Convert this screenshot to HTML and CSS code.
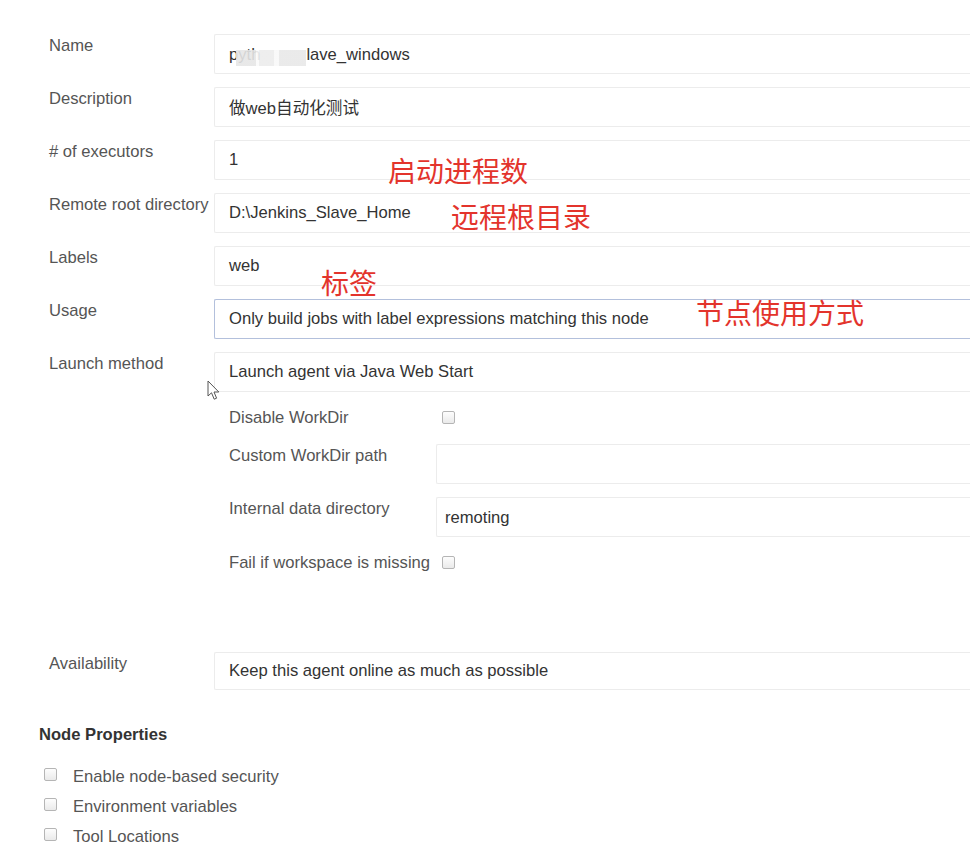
FILE: index.html
```html
<!DOCTYPE html>
<html>
<head>
<meta charset="utf-8">
<link rel="stylesheet" href="styles.css">
</head>
<body>
<div class="page">
  <div class="form">
    <div class="row"><div class="label">Name</div><div class="field"><span class="blur-text">pyth<span class="mask"></span>lave_windows</span></div></div>
    <div class="row"><div class="label">Description</div><div class="field">做web自动化测试</div></div>
    <div class="row"><div class="label"># of executors</div><div class="field">1</div></div>
    <div class="row"><div class="label">Remote root directory</div><div class="field">D:\Jenkins_Slave_Home</div></div>
    <div class="row"><div class="label">Labels</div><div class="field">web</div></div>
    <div class="row"><div class="label">Usage</div><div class="field focused">Only build jobs with label expressions matching this node</div></div>
    <div class="row"><div class="label">Launch method</div><div class="field">Launch agent via Java Web Start</div></div>

    <div class="nested">
      <div class="nrow check"><div class="nlabel">Disable WorkDir</div><span class="box"></span></div>
      <div class="nrow"><div class="nlabel">Custom WorkDir path</div><div class="field nfield"></div></div>
      <div class="nrow"><div class="nlabel">Internal data directory</div><div class="field nfield low">remoting</div></div>
      <div class="nrow check"><div class="nlabel">Fail if workspace is missing</div><span class="box"></span></div>
    </div>

    <div class="row avail"><div class="label">Availability</div><div class="field">Keep this agent online as much as possible</div></div>
  </div>

  <h3 class="section">Node Properties</h3>
  <ul class="props">
    <li><span class="box"></span>Enable node-based security</li>
    <li><span class="box"></span>Environment variables</li>
    <li><span class="box"></span>Tool Locations</li>
  </ul>

  <div class="note n1">启动进程数</div>
  <div class="note n2">远程根目录</div>
  <div class="note n3">标签</div>
  <div class="note n4">节点使用方式</div>

  <svg class="cursor" width="16" height="22" viewBox="0 0 16 22">
    <path d="M1 1 L1 16 L4.5 12.8 L7.2 19.2 L9.6 18.2 L7 12 L11.8 12 Z" fill="#fff" stroke="#555" stroke-width="1" stroke-linejoin="round"/>
  </svg>
</div>
</body>
</html>
```

FILE: styles.css
```css
html, body {
  margin: 0;
  padding: 0;
  background: #fff;
  overflow: hidden;
}
body {
  font-family: "Liberation Sans", Arial, "Noto Sans CJK SC", sans-serif;
  font-size: 16.6px;
  color: #333;
}
.page {
  position: relative;
  width: 970px;
  height: 844px;
  overflow: hidden;
  padding-top: 34px;
  box-sizing: border-box;
}
.form {
  width: 1000px;
}
.row {
  display: flex;
  margin-bottom: 13px;
}
.row + .row {
  margin-top: 0.4px;
}
.label {
  width: 165px;
  padding-left: 49px;
  padding-top: 3px;
  line-height: 18px;
  color: #555;
  flex: none;
  white-space: nowrap;
}
.field {
  flex: 1;
  height: 40px;
  box-sizing: border-box;
  border: 1px solid #ececec;
  border-right: none;
  border-radius: 2px 0 0 2px;
  padding-left: 14px;
  display: flex;
  align-items: center;
  color: #333;
  white-space: nowrap;
}
.field.focused {
  border: 1px solid #b3c0dc;
  border-right: none;
}
.blur-text {
  position: relative;
  top: 1px;
}
.mask {
  display: inline-block;
  width: 70px;
  height: 16px;
  margin-left: -24px;
  vertical-align: -6px;
  background: linear-gradient(90deg, #e6e6e6 0 28%, #fafafa 28% 33%, #ececec 33% 55%, #f8f8f8 55% 62%, #e8e8e8 62% 100%);
  opacity: 0.9;
}
.nested {
  margin-top: 1px;
  padding-left: 229px;
}
.nrow {
  display: flex;
  margin-bottom: 13px;
}
.nrow.check {
  height: 26px;
  align-items: flex-start;
}
.nlabel {
  width: 207px;
  flex: none;
  padding-top: 3px;
  line-height: 18px;
  color: #555;
  white-space: nowrap;
}
.nrow.check .nlabel {
  padding-top: 4px;
}
.nrow .box {
  margin-top: 6px;
  margin-left: 6px;
}
.nfield {
  padding-left: 8px;
}
.nfield.low {
  padding-top: 2px;
}
.box {
  display: inline-block;
  width: 11px;
  height: 11px;
  border: 1px solid #b5b5b5;
  border-radius: 2px;
  background: linear-gradient(#fdfdfd, #eaeaea);
  flex: none;
}
.avail {
  margin-top: 76px;
}
.avail .field {
  height: 38px;
}
.section {
  margin: 36px 0 0 39px;
  font-size: 16.6px;
  line-height: 18px;
  font-weight: bold;
  color: #333;
}
.props {
  list-style: none;
  margin: 25px 0 0 0;
  padding: 0 0 0 44px;
}
.props li {
  display: flex;
  align-items: flex-start;
  height: 30px;
  line-height: 16px;
  color: #555;
}
.props li:last-child {
  height: 16px;
}
.props li .box {
  margin-top: -1px;
  margin-right: 16px;
}
.note {
  position: absolute;
  font-family: "Noto Sans CJK SC", sans-serif;
  font-size: 28px;
  line-height: 28px;
  color: #e3342c;
  white-space: nowrap;
}
.n1 { left: 388px; top: 156px; }
.n2 { left: 451px; top: 202px; }
.n3 { left: 321px; top: 268px; }
.n4 { left: 696px; top: 298px; }
.cursor {
  position: absolute;
  left: 207px;
  top: 380px;
}
```
